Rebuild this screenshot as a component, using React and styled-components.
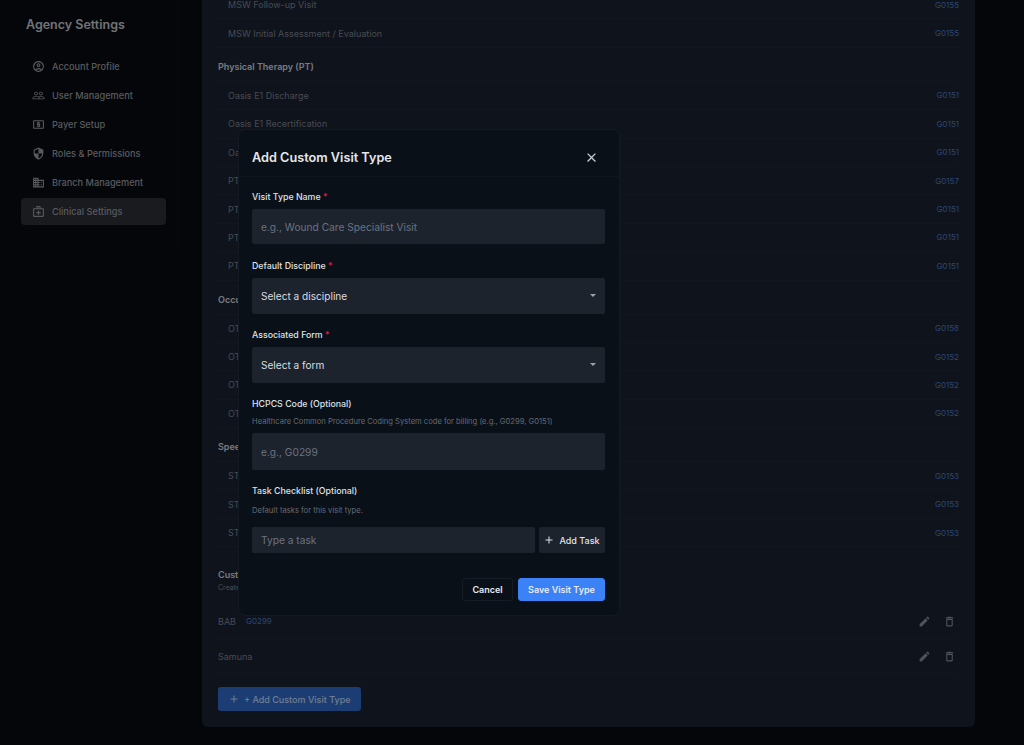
import React from "react";
import styled, { createGlobalStyle } from "styled-components";
import {
  MdOutlineAccountCircle,
  MdPeopleOutline,
  MdOutlineLocalAtm,
  MdSecurity,
  MdOutlineBusiness,
  MdOutlineMedicalServices,
  MdEdit,
  MdDeleteOutline,
  MdAdd,
  MdClose,
} from "react-icons/md";

const GlobalStyle = createGlobalStyle`
  html, body {
    margin: 0;
    height: 100%;
    background: #080b10;
    font-family: Inter, "Liberation Sans", sans-serif;
    overflow: hidden;
  }
  * { box-sizing: border-box; }
`;

const Page = styled.div`
  display: flex;
  width: 1024px;
  height: 745px;
  overflow: hidden;
`;

const Sidebar = styled.aside`
  width: 178px;
  height: 245px;
  flex-shrink: 0;
  padding: 16px 11px 0 21px;
  border-right: 1px solid #0e1117;
`;

const SidebarTitle = styled.h2`
  margin: 0 0 19px 5px;
  font-size: 12.5px;
  line-height: 18px;
  font-weight: 600;
  color: #bcc0c7;
`;

const NavList = styled.nav`
  display: flex;
  flex-direction: column;
  gap: 2px;
`;

const NavItem = styled.div`
  display: flex;
  align-items: center;
  gap: 7px;
  height: 27px;
  padding: 0 11px;
  border-radius: 4px;
  font-size: 9.2px;
  font-weight: 500;
  color: #92979f;
  background: ${({ $active }) => ($active ? "#2b2d32" : "transparent")};

  svg {
    font-size: 13px;
    flex-shrink: 0;
    color: #92979f;
  }
`;

const Main = styled.main`
  width: 773px;
  margin-left: 24px;
  flex-shrink: 0;
`;

const Card = styled.section`
  height: 736px;
  margin-top: -9px;
  padding: 0 16px;
  background: #1a2130;
  border-radius: 6px;
`;

const SectionTitle = styled.div`
  display: flex;
  align-items: center;
  height: 34px;
  padding-top: 4px;
  font-size: 9px;
  font-weight: 600;
  color: #c7ccd4;
  border-bottom: 1px solid #1f2633;
`;

const Row = styled.div`
  display: flex;
  align-items: center;
  justify-content: space-between;
  height: 28.4px;
  padding: 0 0 0 10px;
  font-size: 9px;
  color: #767d88;
  border-bottom: 1px solid #1f2633;
`;

const Code = styled.span`
  font-size: 8px;
  color: #4a75ba;
`;

const CustomHeader = styled.div`
  padding: 22px 0 11px;
`;

const CustomTitle = styled.div`
  margin-bottom: 2px;
  font-size: 9px;
  line-height: 12px;
  font-weight: 600;
  color: #c7ccd4;
`;

const CustomHint = styled.div`
  font-size: 7px;
  line-height: 10px;
  color: #7c838e;
`;

const CustomRow = styled.div`
  display: flex;
  align-items: center;
  gap: 10px;
  height: 35px;
  font-size: 9px;
  color: #767d88;
  border-bottom: 1px solid #1f2633;
`;

const RowActions = styled.div`
  display: flex;
  align-items: center;
  gap: 12px;
  margin-left: auto;
  padding-right: 3px;

  svg {
    font-size: 13px;
    color: #858a93;
  }
`;

const AddCustomButton = styled.div`
  display: inline-flex;
  align-items: center;
  gap: 4px;
  height: 24px;
  margin-top: 13px;
  padding: 0 11px 0 10px;
  border-radius: 3px;
  background: #2f67c2;
  color: #bcd0ee;
  font-size: 9px;
  font-weight: 500;

  svg {
    font-size: 12px;
  }
`;

const Overlay = styled.div`
  position: fixed;
  inset: 0;
  background: rgba(0, 0, 0, 0.4);
  backdrop-filter: blur(0.5px);
`;

const Modal = styled.div`
  position: absolute;
  top: 129px;
  left: 238px;
  width: 382px;
  height: 487px;
  background: #0a1018;
  border: 1px solid #141a24;
  border-radius: 8px;
`;

const ModalHeader = styled.header`
  display: flex;
  align-items: center;
  justify-content: space-between;
  height: 47px;
  padding: 8px 20px 0 13px;
  border-bottom: 1px solid #10161f;
`;

const ModalTitle = styled.h3`
  margin: 0;
  font-size: 12.7px;
  font-weight: 600;
  color: #e5e7eb;
`;

const CloseButton = styled.div`
  display: flex;
  color: #c9cdd3;
  font-size: 15px;
`;

const ModalBody = styled.div`
  display: flex;
  flex-direction: column;
  padding: 14px 14px 0 13px;
`;

const Field = styled.div`
  display: flex;
  flex-direction: column;
  margin-bottom: ${({ $gap }) => $gap ?? 15}px;
`;

const Label = styled.label`
  margin-bottom: 6px;
  font-size: 8.8px;
  line-height: 12px;
  font-weight: 500;
  color: #dfe2e7;
`;

const Required = styled.span`
  color: #e11d48;
`;

const Hint = styled.div`
  margin: ${({ $top }) => $top}px 0 ${({ $bottom }) => $bottom}px;
  font-size: 7.6px;
  line-height: 10px;
  color: #656b75;
`;

const TextInput = styled.input`
  width: 100%;
  height: ${({ $height }) => $height || 35}px;
  padding: 0 9px;
  border: 0;
  border-radius: 2px;
  outline: 0;
  background: #1c232d;
  color: #e5e7eb;
  font-family: inherit;
  font-size: 10.2px;

  &::placeholder {
    color: #6b7280;
    opacity: 1;
  }
`;

const SelectWrap = styled.div`
  position: relative;

  &::after {
    content: "";
    position: absolute;
    top: 16px;
    right: 9px;
    border-left: 3.5px solid transparent;
    border-right: 3.5px solid transparent;
    border-top: 3.5px solid #9ca3af;
  }
`;

const Select = styled.select`
  width: 100%;
  height: 36px;
  padding: 0 9px;
  border: 0;
  border-radius: 2px;
  outline: 0;
  appearance: none;
  background: #1c232d;
  color: #d9dce1;
  font-family: inherit;
  font-size: 10.1px;
`;

const TaskRow = styled.div`
  display: flex;
  gap: 4px;
`;

const AddTaskButton = styled.button`
  display: flex;
  align-items: center;
  justify-content: center;
  gap: 4px;
  flex: 0 0 66px;
  height: 26px;
  padding: 0 1px 0 0;
  border: 0;
  border-radius: 2px;
  background: #1c232d;
  color: #e0e3e8;
  font-family: inherit;
  font-size: 9px;
  font-weight: 500;

  svg {
    font-size: 12px;
  }
`;

const ModalFooter = styled.footer`
  display: flex;
  justify-content: flex-end;
  gap: 5px;
  margin-top: 25px;
`;

const FooterButton = styled.button`
  height: 23px;
  padding: 0;
  width: ${({ $primary }) => ($primary ? "87px" : "51px")};
  border: 1px solid ${({ $primary }) => ($primary ? "#3b82f6" : "#161c25")};
  border-radius: 3px;
  background: ${({ $primary }) => ($primary ? "#3b82f6" : "transparent")};
  color: #e8eaee;
  font-family: inherit;
  font-size: 9px;
  font-weight: 600;
`;

const navItems = [
  { label: "Account Profile", icon: MdOutlineAccountCircle },
  { label: "User Management", icon: MdPeopleOutline },
  { label: "Payer Setup", icon: MdOutlineLocalAtm },
  { label: "Roles & Permissions", icon: MdSecurity },
  { label: "Branch Management", icon: MdOutlineBusiness },
  { label: "Clinical Settings", icon: MdOutlineMedicalServices, active: true },
];

const sections = [
  {
    rows: [
      ["MSW Follow-up Visit", "G0155"],
      ["MSW Initial Assessment / Evaluation", "G0155"],
    ],
  },
  {
    title: "Physical Therapy (PT)",
    rows: [
      ["Oasis E1 Discharge", "G0151"],
      ["Oasis E1 Recertification", "G0151"],
      ["Oasis E1 Start of Care", "G0151"],
      ["PT Assistant Visit", "G0157"],
      ["PT Discharge", "G0151"],
      ["PT Evaluation", "G0151"],
      ["PT Visit", "G0151"],
    ],
  },
  {
    title: "Occupational Therapy (OT)",
    rows: [
      ["OT Assistant Visit", "G0158"],
      ["OT Discharge", "G0152"],
      ["OT Evaluation", "G0152"],
      ["OT Visit", "G0152"],
    ],
  },
  {
    title: "Speech Therapy (ST)",
    rows: [
      ["ST Discharge", "G0153"],
      ["ST Evaluation", "G0153"],
      ["ST Visit", "G0153"],
    ],
  },
];

const App = () => (
  <>
    <GlobalStyle />
    <Page>
      <Sidebar>
        <SidebarTitle>Agency Settings</SidebarTitle>
        <NavList>
          {navItems.map(({ label, icon: Icon, active }) => (
            <NavItem key={label} $active={active}>
              <Icon />
              {label}
            </NavItem>
          ))}
        </NavList>
      </Sidebar>
      <Main>
        <Card>
          {sections.map((section, i) => (
            <div key={i}>
              {section.title && <SectionTitle>{section.title}</SectionTitle>}
              {section.rows.map(([name, code]) => (
                <Row key={name}>
                  {name}
                  <Code>{code}</Code>
                </Row>
              ))}
            </div>
          ))}
          <CustomHeader>
            <CustomTitle>Custom Visit Types</CustomTitle>
            <CustomHint>Create your own visit types</CustomHint>
          </CustomHeader>
          <CustomRow>
            BAB
            <Code>G0299</Code>
            <RowActions>
              <MdEdit />
              <MdDeleteOutline />
            </RowActions>
          </CustomRow>
          <CustomRow>
            Samuna
            <RowActions>
              <MdEdit />
              <MdDeleteOutline />
            </RowActions>
          </CustomRow>
          <AddCustomButton>
            <MdAdd />+ Add Custom Visit Type
          </AddCustomButton>
        </Card>
      </Main>
    </Page>
    <Overlay>
      <Modal>
        <ModalHeader>
          <ModalTitle>Add Custom Visit Type</ModalTitle>
          <CloseButton>
            <MdClose />
          </CloseButton>
        </ModalHeader>
        <ModalBody>
          <Field $gap={16}>
            <Label>
              Visit Type Name <Required>*</Required>
            </Label>
            <TextInput placeholder="e.g., Wound Care Specialist Visit" />
          </Field>
          <Field>
            <Label>
              Default Discipline <Required>*</Required>
            </Label>
            <SelectWrap>
              <Select>
                <option>Select a discipline</option>
              </Select>
            </SelectWrap>
          </Field>
          <Field>
            <Label>
              Associated Form <Required>*</Required>
            </Label>
            <SelectWrap>
              <Select>
                <option>Select a form</option>
              </Select>
            </SelectWrap>
          </Field>
          <Field>
            <Label>HCPCS Code (Optional)</Label>
            <Hint $top={1} $bottom={6}>
              Healthcare Common Procedure Coding System code for billing (e.g., G0299, G0151)
            </Hint>
            <TextInput $height={37} placeholder="e.g., G0299" />
          </Field>
          <Field $gap={0}>
            <Label>Task Checklist (Optional)</Label>
            <Hint $top={3} $bottom={11}>
              Default tasks for this visit type.
            </Hint>
            <TaskRow>
              <TextInput $height={26} placeholder="Type a task" />
              <AddTaskButton>
                <MdAdd />
                Add Task
              </AddTaskButton>
            </TaskRow>
          </Field>
          <ModalFooter>
            <FooterButton>Cancel</FooterButton>
            <FooterButton $primary>Save Visit Type</FooterButton>
          </ModalFooter>
        </ModalBody>
      </Modal>
    </Overlay>
  </>
);

export default App;
